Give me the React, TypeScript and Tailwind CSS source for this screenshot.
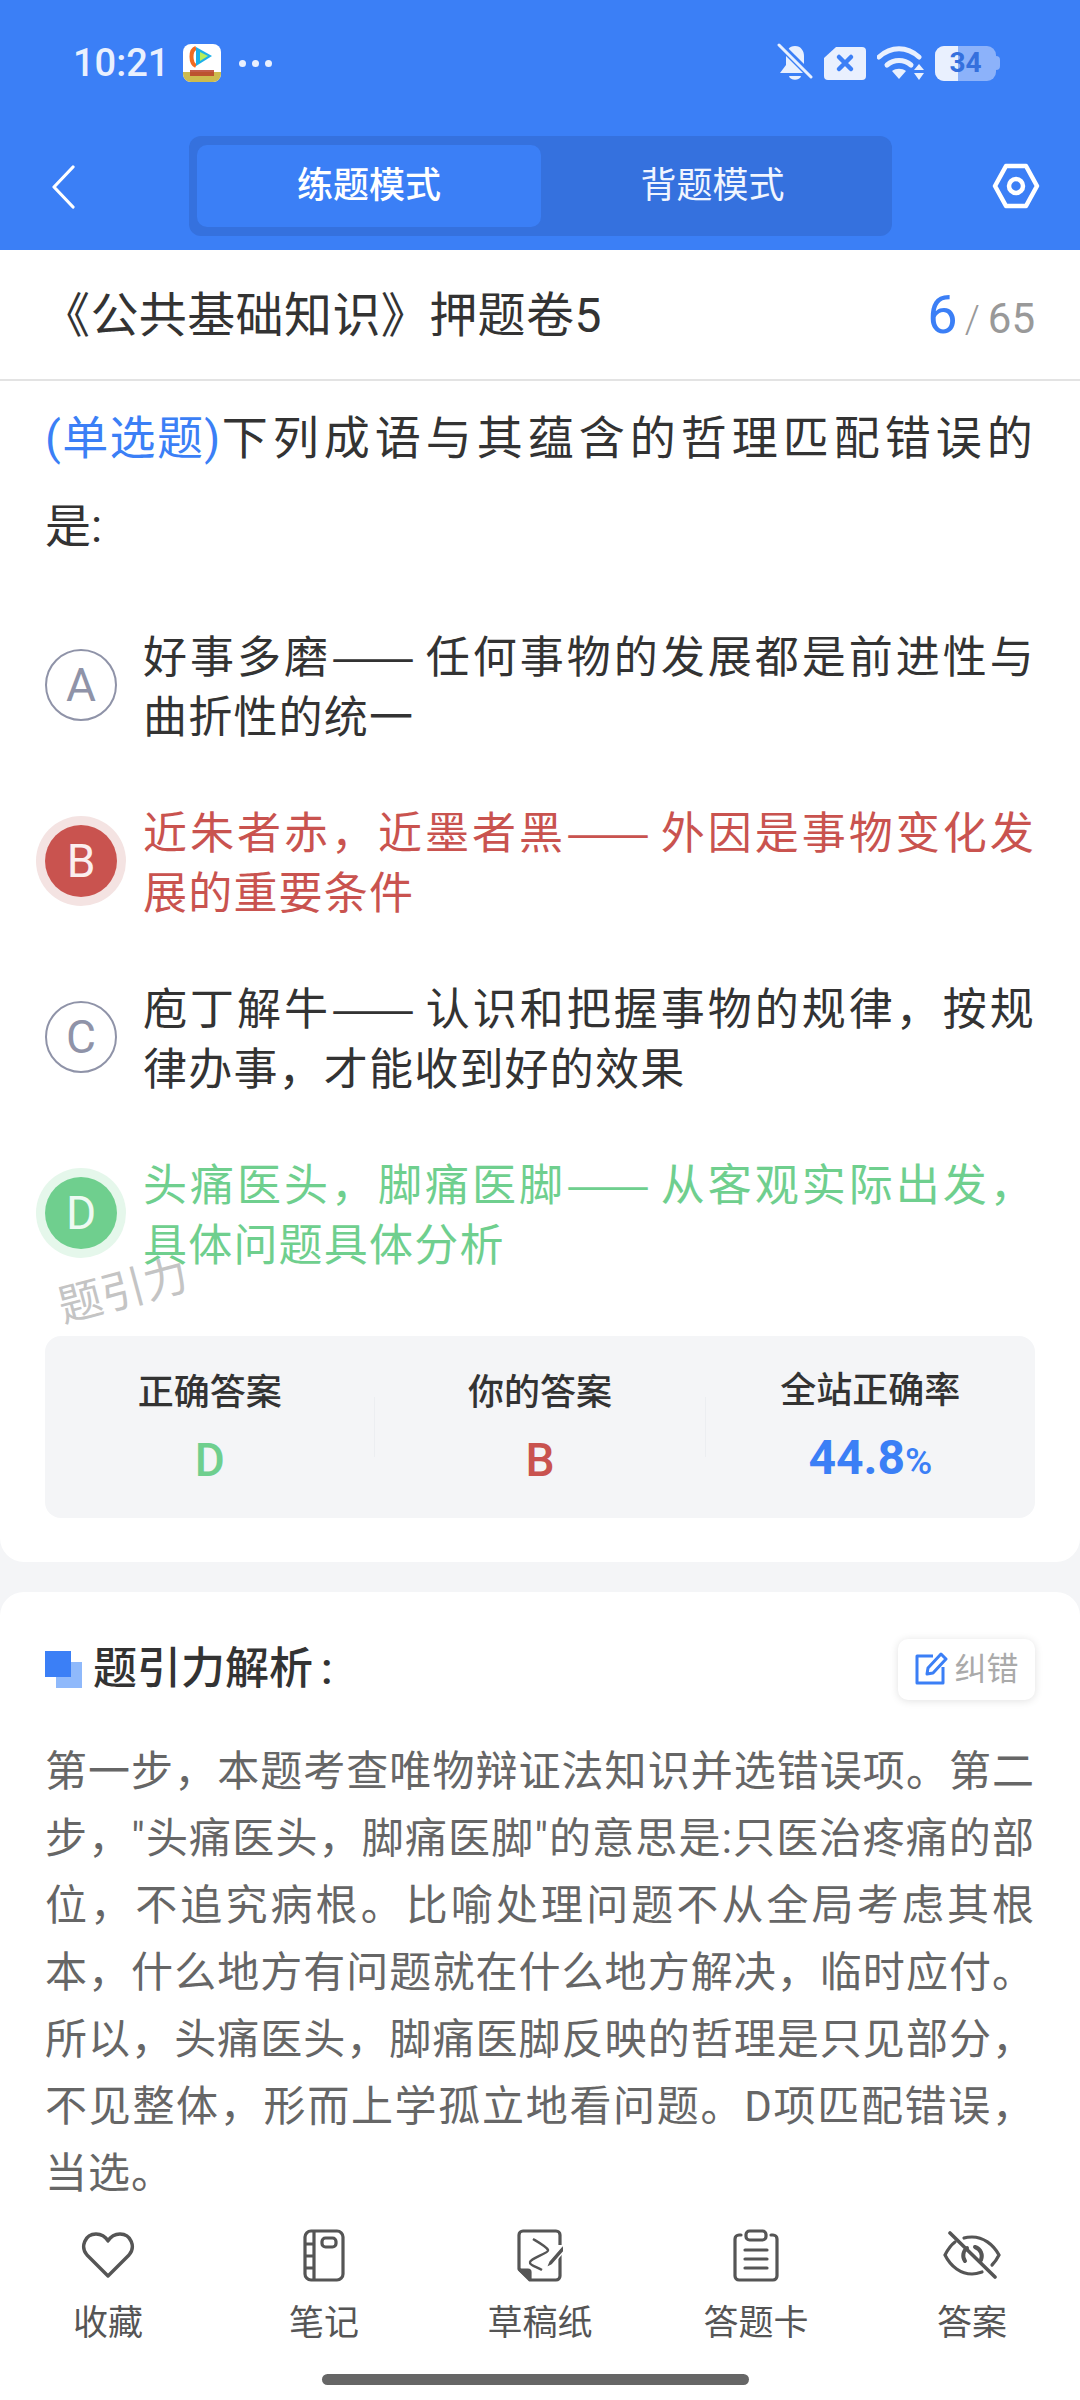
const FONT = "font-['Roboto','Noto_Sans_CJK_SC',sans-serif]";

type OptionProps = {
  letter: string;
  before: string;
  after: string;
  second: string;
  state?: 'wrong' | 'right';
};

function OptionRow({ letter, before, after, second, state }: OptionProps) {
  const textColor = state === 'wrong' ? 'text-[#c9534f]' : state === 'right' ? 'text-[#6fcf8e]' : 'text-[#333333]';
  return (
    <div className="flex items-center h-[176px]">
      <div className="w-[143px] shrink-0 pl-[45px]">
        {state === 'wrong' && (
          <div className="-ml-[9px] w-[90px] h-[90px] rounded-full bg-[#f4e3e2] flex items-center justify-center">
            <div className="w-[72px] h-[72px] shrink-0 rounded-full bg-[#c9534f] flex items-center justify-center text-[#fbeeee] text-[46px]">{letter}</div>
          </div>
        )}
        {state === 'right' && (
          <div className="-ml-[9px] w-[90px] h-[90px] rounded-full bg-[#e5f7eb] flex items-center justify-center">
            <div className="w-[72px] h-[72px] shrink-0 rounded-full bg-[#6fcf8e] flex items-center justify-center text-[#eefaf2] text-[46px]">{letter}</div>
          </div>
        )}
        {!state && (
          <div className="w-[72px] h-[72px] rounded-full border-2 border-[#8f93a8] flex items-center justify-center text-[#8f93a8] text-[46px]">{letter}</div>
        )}
      </div>
      <div className={`w-[892px] shrink-0 -mt-[3px] font-['Noto_Sans_CJK_SC',sans-serif] text-[44px] leading-[60px] tracking-[1.2px] ${textColor}`}>
        <div className="text-justify [text-align-last:justify]">
          {before}
          <span className="inline-block w-[93px] origin-left scale-x-[1.14] whitespace-nowrap tracking-normal">——</span>
          {after}
        </div>
        <div>{second}</div>
      </div>
    </div>
  );
}

function ToolItem({ label, icon }: { label: string; icon: React.ReactNode }) {
  return (
    <div className="flex flex-col items-center w-[216px]">
      <div className="h-[56px] flex items-center justify-center">{icon}</div>
      <div className="mt-[18px] text-[35px] leading-[46px] text-[#555555]">{label}</div>
    </div>
  );
}

export default function App() {
  return (
    <div className={`relative w-[1080px] h-[2400px] overflow-hidden bg-[#f4f5f7] ${FONT}`}>
      {/* blue header */}
      <div className="bg-[#3b7ff6] h-[250px] flex flex-col">
        <div className="h-[120px] pl-[73px] pr-[80px] flex items-center justify-between pt-[6px]">
          <div className="flex items-center">
            <span className="text-[38px] font-medium text-[#e9f0fe]">10:21</span>
            <svg width="38" height="38" viewBox="0 0 38 38" className="ml-[14px]">
              <rect width="38" height="38" rx="8" fill="#fff" />
              <path d="M0 28h38v2a8 8 0 0 1-8 8H8a8 8 0 0 1-8-8z" fill="#cdbb4e" />
              <rect x="7" y="26" width="24" height="6" fill="#b8402a" opacity=".85" />
              <path d="M13 4c-6 2-6 15 0 18" stroke="#f26b21" strokeWidth="4" fill="none" />
              <path d="M13 3l16 9-16 10z" fill="#1db0e8" />
              <path d="M17 8l8 4-8 5z" fill="#b6ee5a" />
            </svg>
            <div className="ml-[18px] flex gap-[6px]">
              <span className="w-[7px] h-[7px] rounded-full bg-[#e9f0fe]" />
              <span className="w-[7px] h-[7px] rounded-full bg-[#e9f0fe]" />
              <span className="w-[7px] h-[7px] rounded-full bg-[#e9f0fe]" />
            </div>
          </div>
          <div className="flex items-center gap-[10px]">
            <svg width="36" height="40" viewBox="0 0 36 40" className="-ml-[3px]">
              <path d="M18 3c6 0 9 5 9 10v9l6 8H3l6-8v-9c0-5 3-10 9-10z" fill="#e9f0fe" />
              <path d="M12 33h12c-1 5-11 5-12 0z" fill="#e9f0fe" />
              <path d="M1 0l35 35" stroke="#3b7ff6" strokeWidth="7" />
              <path d="M2 2l32 32" stroke="#e9f0fe" strokeWidth="3" strokeLinecap="round" />
            </svg>
            <svg width="44" height="35" viewBox="0 0 44 35">
              <path d="M13 1h26a4 4 0 0 1 4 4v25a4 4 0 0 1-4 4H5a4 4 0 0 1-4-4V12z" fill="#e9f0fe" />
              <path d="M16 11l12 12M28 11L16 23" stroke="#3b7ff6" strokeWidth="4.5" strokeLinecap="round" />
            </svg>
            <svg width="48" height="35" viewBox="0 0 48 35">
              <path d="M2 11c12-11 28-11 40 0" stroke="#e9f0fe" strokeWidth="5" fill="none" strokeLinecap="round" />
              <path d="M10 19c7-6 17-6 24 0" stroke="#e9f0fe" strokeWidth="5" fill="none" strokeLinecap="round" />
              <path d="M15 25c4-3 10-3 14 0l-7 8z" fill="#e9f0fe" />
              <path d="M42 18l5 6H37zM42 34l5-7H37z" fill="#e9f0fe" />
            </svg>
            <div className="flex items-center">
              <div className="relative w-[61px] h-[35px] rounded-[9px] bg-[#8cb2fa] overflow-hidden flex items-center justify-center">
                <div className="absolute left-0 top-0 bottom-0 w-[23px] bg-[#e9f0fe]" />
                <span className="relative text-[28px] font-bold text-[#3570dd]">34</span>
              </div>
              <div className="w-[4px] h-[14px] rounded-r-full bg-[#8cb2fa]" />
            </div>
          </div>
        </div>
        <div className="flex items-center h-[100px] mt-[16px] relative">
          <svg width="28" height="44" viewBox="0 0 28 44" className="absolute left-[50px] top-[29px]" fill="none" stroke="#fff" strokeWidth="3.2" strokeLinecap="round" strokeLinejoin="round">
            <path d="M23 2L4 22l19 20" />
          </svg>
          <div className="ml-[189px] w-[703px] h-[100px] rounded-[12px] bg-[#3571de] flex p-[8px] pt-[9px]">
            <div className="w-[344px] h-[82px] rounded-[10px] bg-[#3b7ff6] flex items-center justify-center text-white text-[36px] font-medium">练题模式</div>
            <div className="flex-1 h-[82px] flex items-center justify-center text-[#f0f5ff] text-[36px]">背题模式</div>
          </div>
          <svg width="48" height="46" viewBox="0 0 48 46" className="absolute left-[992px] top-[27px]">
            <path d="M14 3h20l11 20-11 20H14L3 23z" fill="none" stroke="#fff" strokeWidth="4.5" strokeLinejoin="round" />
            <circle cx="24" cy="23" r="7" fill="none" stroke="#fff" strokeWidth="4.5" />
          </svg>
        </div>
      </div>

      {/* first card */}
      <div className="bg-white rounded-b-[24px] h-[1312px]">
        <div className="h-[131px] border-b-2 border-[#e3e3e3] pl-[44px] pr-[45px] flex items-center justify-between pt-[3px]">
          <div className="text-[48px] tracking-[0.4px] text-[#333333] -ml-[2px]">《公共基础知识》押题卷5</div>
          <div className="flex items-baseline -mt-[3px]">
            <span className="text-[54px] text-[#3b7ff6]">6</span>
            <span className="ml-[7px] text-[38px] font-light text-[#999999]">/</span>
            <span className="ml-[8px] text-[42px] text-[#999999]">65</span>
          </div>
        </div>
        <div className="pl-[45px] pt-[13px] text-[46px] leading-[88px] text-[#333333] whitespace-nowrap">
          <span className="text-[#3b7ff6] tracking-[1.4px]">(单选题)</span><span className="tracking-[5px]">下列成语与其蕴含的哲理匹配错误的</span><br />是:
        </div>
        <div className="mt-[27px]">
          <OptionRow letter="A" before="好事多磨" after="任何事物的发展都是前进性与" second="曲折性的统一" />
          <OptionRow letter="B" state="wrong" before="近朱者赤，近墨者黑" after="外因是事物变化发" second="展的重要条件" />
          <OptionRow letter="C" before="庖丁解牛" after="认识和把握事物的规律，按规" second="律办事，才能收到好的效果" />
          <div className="relative">
            <OptionRow letter="D" state="right" before="头痛医头，脚痛医脚" after="从客观实际出发，" second="具体问题具体分析" />
            <span className="absolute left-[57px] top-[133px] text-[44px] text-[#c4c4c4] -rotate-[15deg]">题引力</span>
          </div>
        </div>
        {/* stats */}
        <div className="mx-[45px] mt-[35px] h-[182px] rounded-[16px] bg-[#f4f5f7] flex items-center">
          <div className="flex-1 flex flex-col items-center">
            <div className="text-[36px] leading-[50px] font-medium text-[#333333]">正确答案</div>
            <div className="mt-[16px] text-[46px] leading-[52px] font-medium text-[#6fcf8e]">D</div>
          </div>
          <div className="w-px h-[60px] bg-[#eceef1]" />
          <div className="flex-1 flex flex-col items-center">
            <div className="text-[36px] leading-[50px] font-medium text-[#333333]">你的答案</div>
            <div className="mt-[16px] text-[46px] leading-[52px] font-medium text-[#c9534f]">B</div>
          </div>
          <div className="w-px h-[60px] bg-[#eceef1]" />
          <div className="flex-1 flex flex-col items-center">
            <div className="text-[36px] leading-[50px] font-medium text-[#333333]">全站正确率</div>
            <div className="mt-[16px] text-[48px] leading-[52px] font-bold text-[#3b7ff6]">44.8<span className="text-[37px] font-medium">%</span></div>
          </div>
        </div>
      </div>

      {/* analysis card */}
      <div className="mt-[30px] bg-white rounded-t-[24px] h-[900px]">
        <div className="px-[45px] pt-[44px] flex items-center justify-between">
          <div className="flex items-center">
            <div className="relative w-[37px] h-[37px]">
              <div className="absolute right-0 bottom-0 w-[26px] h-[26px] bg-[#8fb9fb]" />
              <div className="absolute left-0 top-0 w-[26px] h-[26px] bg-[#3b7ff6]" />
            </div>
            <span className="ml-[11px] text-[44px] font-medium text-[#333333]">题引力解析</span>
            <span className="ml-[8px] text-[44px] font-medium text-[#333333]">:</span>
          </div>
          <div className="w-[137px] h-[61px] rounded-[10px] bg-white shadow-[0_1px_8px_rgba(0,0,0,0.12)] flex items-center justify-center">
            <svg width="34" height="34" viewBox="0 0 34 34" fill="none" stroke="#3b7ff6" strokeWidth="3" strokeLinejoin="round">
              <path d="M19 4H3v27h26V15" />
              <path d="M27 2l5 5-13 14-6 1 1-6z" />
            </svg>
            <span className="ml-[6px] text-[32px] text-[#aaaaaa]">纠错</span>
          </div>
        </div>
        <div className="mt-[36px] pl-[45px] w-[1035px] text-[42px] leading-[67px] tracking-[1px] text-[#666666] whitespace-nowrap">
          <div className="text-justify [text-align-last:justify]">第一步，本题考查唯物辩证法知识并选错误项。第二</div>
          <div className="text-justify [text-align-last:justify]">步，"头痛医头，脚痛医脚"的意思是:只医治疼痛的部</div>
          <div className="text-justify [text-align-last:justify]">位，不追究病根。比喻处理问题不从全局考虑其根</div>
          <div className="text-justify [text-align-last:justify]">本，什么地方有问题就在什么地方解决，临时应付。</div>
          <div className="text-justify [text-align-last:justify]">所以，头痛医头，脚痛医脚反映的哲理是只见部分，</div>
          <div className="text-justify [text-align-last:justify]">不见整体，形而上学孤立地看问题。D项匹配错误，</div>
          <div>当选。</div>
        </div>
      </div>

      {/* bottom toolbar */}
      <div className="absolute left-0 right-0 bottom-0 h-[190px] bg-white">
        <div className="flex pt-[17px]">
          <ToolItem label="收藏" icon={
            <svg width="54" height="48" viewBox="0 0 54 48" fill="none" stroke="#555555" strokeWidth="3.4" strokeLinejoin="round">
              <path d="M27 45L6 24C-1 16 4 3 15 3c5 0 9 2 12 7 3-5 7-7 12-7 11 0 16 13 9 21z" />
            </svg>
          } />
          <ToolItem label="笔记" icon={
            <svg width="42" height="53" viewBox="0 0 42 53" fill="none" stroke="#555555" strokeWidth="3.2">
              <rect x="2" y="2" width="38" height="49" rx="6" />
              <path d="M11 2v49M2 15h9M2 27h9M2 39h9" />
              <rect x="19" y="9" width="14" height="9" rx="3.5" />
            </svg>
          } />
          <ToolItem label="草稿纸" icon={
            <svg width="46" height="53" viewBox="0 0 46 53" fill="none" stroke="#555555" strokeWidth="3.2" strokeLinejoin="round">
              <path d="M43 16V6a4 4 0 0 0-4-4H6a4 4 0 0 0-4 4v34l11 11h26a4 4 0 0 0 4-4V24" />
              <path d="M3 41h8a2 2 0 0 1 2 2v7z" fill="#555555" />
              <path d="M16 10c5 3 14 8 15 11 1 3-17 8-18 12-1 3 7 5 12 8" strokeWidth="2.4" />
              <path d="M45 17L32 32l-3 7 6-3 13-15" fill="#555555" stroke="#ffffff" strokeWidth="1.4" />
            </svg>
          } />
          <ToolItem label="答题卡" icon={
            <svg width="46" height="53" viewBox="0 0 46 53" fill="none" stroke="#555555" strokeWidth="3.2" strokeLinecap="round">
              <path d="M8 6H6a4 4 0 0 0-4 4v37a4 4 0 0 0 4 4h34a4 4 0 0 0 4-4V10a4 4 0 0 0-4-4h-2" />
              <rect x="13" y="2" width="20" height="9" rx="3.5" />
              <path d="M12 21h22M12 30h22M12 39h22" />
            </svg>
          } />
          <ToolItem label="答案" icon={
            <svg width="58" height="48" viewBox="0 0 58 48" fill="none" stroke="#555555" strokeWidth="3.2" strokeLinecap="round">
              <path d="M12 11C8 14 5 18 2 24c6 12 16 19 27 19 4 0 7-1 10-2" />
              <path d="M21 7c3-1 5-1 8-1 11 0 21 7 27 18-2 4-4 7-7 10" />
              <path d="M24 17c-4 3-5 9-2 13M38 29c2-5 0-11-6-13" strokeWidth="4" />
              <path d="M7 2l45 44" strokeWidth="3.6" />
            </svg>
          } />
        </div>
        <div className="absolute left-[322px] top-[164px] w-[427px] h-[11px] rounded-full bg-[#666666]" />
      </div>
    </div>
  );
}
